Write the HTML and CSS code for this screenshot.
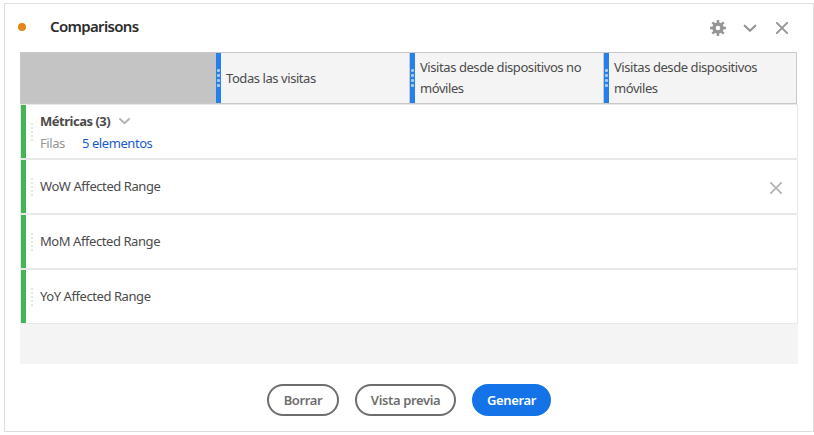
FILE: index.html
```html
<!DOCTYPE html>
<html lang="es">
<head>
<meta charset="utf-8">
<title>Comparisons</title>
<link rel="stylesheet" href="styles.css">
</head>
<body>
<section class="panel">
  <header class="panel-header">
    <span class="status"></span>
    <h1>Comparisons</h1>
    <svg class="gear" width="16" height="16" viewBox="0 0 16 16"><g fill="#949494"><path fill-rule="evenodd" d="M8 2.2a5.8 5.8 0 1 0 0 11.6A5.8 5.8 0 0 0 8 2.2zm0 3.5a2.3 2.3 0 1 1 0 4.6 2.3 2.3 0 0 1 0-4.6z"/><path id="tooth" d="M6.8 0h2.4v3H6.8zM6.8 13h2.4v3H6.8zM0 6.8h3v2.4H0zM13 6.8h3v2.4h-3z"/><use href="#tooth" transform="rotate(45 8 8)"/></g></svg>
    <svg class="chev" width="14" height="9" viewBox="0 0 14 9"><path d="M1.7 1.7 7 6.8l5.3-5.1" fill="none" stroke="#949494" stroke-width="2.2" stroke-linecap="round" stroke-linejoin="round"/></svg>
    <svg width="12" height="12" viewBox="0 0 12 12"><path d="M.8.8l10.4 10.4M11.2.8.8 11.2" stroke="#949494" stroke-width="1.9" stroke-linecap="round"/></svg>
  </header>
  <div class="columns">
    <div class="corner"></div>
    <div class="column"><i class="grip"></i><span>Todas las visitas</span></div>
    <div class="column"><i class="grip"></i><span>Visitas desde dispositivos no<br>móviles</span></div>
    <div class="column"><i class="grip"></i><span>Visitas desde dispositivos<br>móviles</span></div>
  </div>
  <div class="rows">
    <div class="row">
      <i class="handle"></i>
      <div class="metrics">
        <div class="line"><b>Métricas (3)</b><svg width="11" height="7" viewBox="0 0 11 7"><path d="M1 1l4.5 4.2L10 1" fill="none" stroke="#b3b3b3" stroke-width="1.9" stroke-linecap="round" stroke-linejoin="round"/></svg></div>
        <div class="line"><span class="muted">Filas</span><a>5 elementos</a></div>
      </div>
    </div>
    <div class="row"><i class="handle"></i><span class="name">WoW Affected Range</span><svg class="remove" width="12" height="12" viewBox="0 0 12 12"><path d="M.9.9l10.2 10.2M11.1.9.9 11.1" stroke="#b3b3b3" stroke-width="1.8" stroke-linecap="round"/></svg></div>
    <div class="row"><i class="handle"></i><span class="name">MoM Affected Range</span></div>
    <div class="row"><i class="handle"></i><span class="name">YoY Affected Range</span></div>
  </div>
  <footer class="actions">
    <button class="clear">Borrar</button>
    <button class="preview">Vista previa</button>
    <button class="build">Generar</button>
  </footer>
</section>
</body>
</html>
```
FILE: styles.css
```css
* { box-sizing: border-box; }
body {
  margin: 0;
  padding: 3px 0 0 4px;
  background: #fff;
  color: #4b4b4b;
  font: 13px/21px "Noto Sans", sans-serif;
  letter-spacing: -0.43px;
}
span, b, a { white-space: nowrap; }
svg { display: block; flex: none; }
.panel {
  width: 810px;
  height: 429px;
  border: 1px solid #dedede;
  padding: 0 15px;
}
.panel-header {
  height: 48px;
  display: flex;
  align-items: center;
  padding-right: 10px;
}
.status { width: 8px; height: 8px; border-radius: 50%; background: #e68619; margin: -3px 24px 0 -2px; }
h1 { flex: 1; margin: 0; padding-bottom: 3px; font-size: 15px; font-weight: 600; color: #2c2c2c; letter-spacing: -0.67px; }
.gear { margin-right: 17px; }
.chev { margin-right: 19px; }
.columns {
  width: 777px;
  height: 52px;
  display: grid;
  grid-template-columns: 195px 194px 194px 192px;
  background: #f4f4f4;
  border: 1px solid #c8c8c8;
}
.corner { background: #c4c4c4; }
.column { display: flex; align-items: center; gap: 5px; }
.column + .column { border-left: 1px solid #c8c8c8; margin-left: -1px; }
.grip {
  width: 5px;
  height: 50px;
  background: radial-gradient(circle at 2.5px 2.5px, #a5cbf8 1.3px, transparent 1.8px) 0 0 / 5px 5px repeat-y content-box, #2680eb;
  padding: 15px 0;
}
.rows { width: 778px; height: 260px; background: #f4f4f4; }
.row {
  height: 55px;
  display: flex;
  align-items: center;
  background: #fff;
  border: 1px solid #e8e8e8;
  border-radius: 0 2px 2px 0;
  padding-right: 15px;
  box-shadow: inset 5px 0 #44b556;
}
.handle {
  width: 2px;
  height: 18px;
  margin: 0 7px 0 10px;
  background: repeating-linear-gradient(#e6e6e6 0 2px, transparent 2px 4px);
}
.name { flex: 1; }
.remove { margin-top: 2px; }
.metrics { padding-top: 2px; }
.line { display: flex; align-items: center; gap: 9px; height: 22px; }
.line b { letter-spacing: -0.48px; }
.muted { color: #959595; width: 33px; }
a { color: #1a5bcb; }
.actions { display: flex; justify-content: center; gap: 16px; padding: 20px 0 0; }
button {
  height: 32px;
  padding: 0;
  border: 2px solid #6e6e6e;
  border-radius: 16px;
  background: #fff;
  color: #6e6e6e;
  font: 600 13px/20px "Noto Sans", sans-serif;
  letter-spacing: -0.37px;
}
.clear { width: 72px; }
.preview { width: 101px; }
.build { width: 79px; color: #fff; background: #1473e6; border-color: #1473e6; }
```
